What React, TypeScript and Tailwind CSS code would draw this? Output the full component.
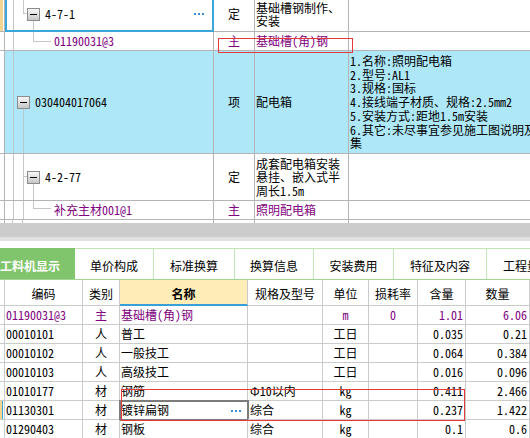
import React from "react";

const mono = "font-['Noto_Sans_Mono_CJK_SC','Noto_Sans_CJK_SC',monospace]";
const sans = "font-['Noto_Sans_CJK_SC','Noto_Sans',sans-serif]";

// top grid cell
const tc = "shrink-0 border-r border-b border-[#b4b4b4] flex items-center";
// bottom grid cell
const bc = "shrink-0 border-r border-b border-[#cbcbcb] flex items-center";

const TL = "#c6c6c6";

function Box({ x, y }: { x: number; y: number }) {
  return (
    <g>
      <rect x={x + 0.5} y={y + 0.5} width={12} height={12} fill="url(#bx)" stroke="#8c8c8c" />
      <line x1={x + 3} x2={x + 10} y1={y + 6.5} y2={y + 6.5} stroke="#000" />
    </g>
  );
}

function Dots() {
  return (
    <div className="flex gap-[2px]">
      <span className="w-[2px] h-[2px] bg-[#3a8fd4]" />
      <span className="w-[2px] h-[2px] bg-[#3a8fd4]" />
      <span className="w-[2px] h-[2px] bg-[#3a8fd4]" />
    </div>
  );
}

function TopGrid() {
  return (
    <div className="-mt-[3px]">
      {/* row 1 */}
      <div className="flex h-[35px]">
        <div className={`${tc} w-[5px] items-stretch`}>
          <div className="w-[3px] bg-[#f3d490]" />
        </div>
        <div className={`${tc} w-[209px] outline-2 outline-[#3ba6d8] -outline-offset-2`}>
          <svg width="40" height="34" className="shrink-0" shapeRendering="crispEdges">
            <line x1="8.5" x2="8.5" y1="0" y2="34" stroke={TL} />
            <line x1="18.5" x2="18.5" y1="0" y2="16.5" stroke={TL} />
            <line x1="18.5" x2="22" y1="16.5" y2="16.5" stroke={TL} />
            <line x1="28.5" x2="28.5" y1="24" y2="34" stroke={TL} />
            <Box x={22} y={11} />
          </svg>
          <span>4-7-1</span>
          <div className="ml-auto mr-[9px] mb-[1px]">
            <Dots />
          </div>
        </div>
        <div className={`${tc} w-[41px] justify-center`}>定</div>
        <div className={`${tc} w-[94px] pl-[1px] leading-[13px]`}>
          基础槽钢制作、
          <br />
          安装
        </div>
        <div className={`${tc} w-[200px]`} />
      </div>

      {/* row 2 */}
      <div className="flex h-[19px] text-[#800080]">
        <div className={`${tc} w-[5px]`} />
        <div className={`${tc} w-[209px]`}>
          <svg width="49" height="18" className="shrink-0" shapeRendering="crispEdges">
            <line x1="8.5" x2="8.5" y1="0" y2="18" stroke={TL} />
            <line x1="28.5" x2="28.5" y1="0" y2="9.5" stroke={TL} />
            <line x1="28.5" x2="46" y1="9.5" y2="9.5" stroke={TL} />
          </svg>
          <span>01190031@3</span>
        </div>
        <div className={`${tc} w-[41px] justify-center`}>主</div>
        <div className={`${tc} w-[94px] pl-[1px]`}>基础槽(角)钢</div>
        <div className={`${tc} w-[200px]`} />
      </div>

      {/* row 3 */}
      <div className="flex h-[103px]">
        <div className={`${tc} w-[5px]`} />
        <div className={`${tc} w-[209px] bg-[#aee8f8]`}>
          <svg width="30" height="102" className="shrink-0" shapeRendering="crispEdges">
            <line x1="8.5" x2="8.5" y1="0" y2="102" stroke="#b8c8cc" />
            <line x1="18.5" x2="18.5" y1="57" y2="102" stroke="#b8c8cc" />
            <Box x={12} y={45} />
          </svg>
          <span>030404017064</span>
        </div>
        <div className={`${tc} w-[41px] justify-center bg-[#aee8f8]`}>项</div>
        <div className={`${tc} w-[94px] pl-[1px] bg-[#aee8f8]`}>配电箱</div>
        <div className={`${tc} w-[200px] pl-[1px] bg-[#aee8f8] leading-[13.7px] whitespace-nowrap overflow-hidden`}>
          <div>
            <div>1.名称:照明配电箱</div>
            <div>2.型号:AL1</div>
            <div>3.规格:国标</div>
            <div>4.接线端子材质、规格:2.5mm2</div>
            <div>5.安装方式:距地1.5m安装</div>
            <div>6.其它:未尽事宜参见施工图说明及</div>
            <div>集</div>
          </div>
        </div>
      </div>

      {/* row 4 */}
      <div className="flex h-[47px]">
        <div className={`${tc} w-[5px]`} />
        <div className={`${tc} w-[209px]`}>
          <svg width="40" height="46" className="shrink-0" shapeRendering="crispEdges">
            <line x1="8.5" x2="8.5" y1="0" y2="46" stroke={TL} />
            <line x1="18.5" x2="18.5" y1="0" y2="46" stroke={TL} />
            <line x1="18.5" x2="22" y1="22.5" y2="22.5" stroke={TL} />
            <line x1="28.5" x2="28.5" y1="29.5" y2="46" stroke={TL} />
            <Box x={22} y={17} />
          </svg>
          <span>4-2-77</span>
        </div>
        <div className={`${tc} w-[41px] justify-center`}>定</div>
        <div className={`${tc} w-[94px] pl-[1px] leading-[13.5px]`}>
          成套配电箱安装
          <br />
          悬挂、嵌入式半
          <br />
          周长1.5m
        </div>
        <div className={`${tc} w-[200px]`} />
      </div>

      {/* row 5 */}
      <div className="flex h-[19px] text-[#800080]">
        <div className={`${tc} w-[5px]`} />
        <div className={`${tc} w-[209px]`}>
          <svg width="49" height="18" className="shrink-0" shapeRendering="crispEdges">
            <line x1="8.5" x2="8.5" y1="0" y2="18" stroke={TL} />
            <line x1="18.5" x2="18.5" y1="0" y2="18" stroke={TL} />
            <line x1="28.5" x2="28.5" y1="0" y2="7.5" stroke={TL} />
            <line x1="28.5" x2="46" y1="7.5" y2="7.5" stroke={TL} />
          </svg>
          <span>补充主材001@1</span>
        </div>
        <div className={`${tc} w-[41px] justify-center`}>主</div>
        <div className={`${tc} w-[94px] pl-[1px]`}>照明配电箱</div>
        <div className={`${tc} w-[200px]`} />
      </div>

      {/* partial next row */}
      <div className="flex h-[3px]">
        <div className="shrink-0 w-[5px] border-r border-[#b4b4b4]" />
        <div className="shrink-0 w-[209px] border-r border-[#b4b4b4] flex">
          <div className="w-[8px] border-r border-[#c6c6c6]" />
          <div className="w-[10px] border-r border-[#c6c6c6]" />
        </div>
        <div className="shrink-0 w-[41px] border-r border-[#b4b4b4]" />
        <div className="shrink-0 w-[94px] border-r border-[#b4b4b4]" />
      </div>
    </div>
  );
}

const tabs = ["单价构成", "标准换算", "换算信息", "安装费用", "特征及内容", "工程量明细"];
const tabW = ["w-[79px]", "w-[81px]", "w-[79px]", "w-[80px]", "w-[93px]", "w-[93px]"];

function Tabs() {
  return (
    <div className={`flex h-[32px] border-b border-[#a3d592] overflow-hidden ${sans}`}>
      <div className="shrink-0 -ml-[15px] w-[90px] h-full bg-[#80c46b] flex items-center justify-center pt-[4px] text-white font-bold">
        工料机显示
      </div>
      {tabs.map((t, i) => (
        <div
          key={t}
          className={`shrink-0 ${tabW[i]} h-full border-t border-r border-[#c3e6b5] flex items-center justify-center pt-[4px]`}
        >
          {t}
        </div>
      ))}
    </div>
  );
}

type Row = {
  code: string;
  kind: string;
  name: string;
  spec: string;
  unit: string;
  loss: string;
  qty: string;
  amt: string;
  purple?: boolean;
  sel?: boolean;
};

const rows: Row[] = [
  { code: "01190031@3", kind: "主", name: "基础槽(角)钢", spec: "", unit: "m", loss: "0", qty: "1.01", amt: "6.06", purple: true },
  { code: "00010101", kind: "人", name: "普工", spec: "", unit: "工日", loss: "", qty: "0.035", amt: "0.21" },
  { code: "00010102", kind: "人", name: "一般技工", spec: "", unit: "工日", loss: "", qty: "0.064", amt: "0.384" },
  { code: "00010103", kind: "人", name: "高级技工", spec: "", unit: "工日", loss: "", qty: "0.016", amt: "0.096" },
  { code: "01010177", kind: "材", name: "钢筋", spec: "Φ10以内", unit: "kg", loss: "", qty: "0.411", amt: "2.466" },
  { code: "01130301", kind: "材", name: "镀锌扁钢", spec: "综合", unit: "kg", loss: "", qty: "0.237", amt: "1.422", sel: true },
  { code: "01290403", kind: "材", name: "钢板", spec: "综合", unit: "kg", loss: "", qty: "0.1", amt: "0.6" },
];

function BottomTable() {
  return (
    <div>
      <div className={`flex h-[26px] ${sans}`}>
        <div className={`${bc} w-[5px]`} />
        <div className={`${bc} w-[78px] justify-center pt-[3px]`}>编码</div>
        <div className={`${bc} w-[37px] justify-center pt-[3px]`}>类别</div>
        <div className="shrink-0 w-[128px] border-r border-[#cbcbcb] border-b-2 border-b-[#3a9fd8] bg-[#ffedb7] flex items-center justify-center pt-[3px] font-bold">
          名称
        </div>
        <div className={`${bc} w-[75px] justify-center pt-[3px]`}>规格及型号</div>
        <div className={`${bc} w-[46px] justify-center pt-[3px]`}>单位</div>
        <div className={`${bc} w-[49px] justify-center pt-[3px]`}>损耗率</div>
        <div className={`${bc} w-[48px] justify-center pt-[3px]`}>含量</div>
        <div className={`${bc} w-[64px] justify-center pt-[3px]`}>数量</div>
      </div>
      {rows.map((r) => (
        <div key={r.code} className={`flex h-[19px] ${r.purple ? "text-[#800080]" : ""}`}>
          <div className={`${bc} w-[5px] items-stretch`}>
            {r.sel && <div className="w-[3px] bg-[#f3d490] border-r border-[#3ba6d8]" />}
          </div>
          <div className={`${bc} w-[78px] pl-[1px]`}>{r.code}</div>
          <div className={`${bc} w-[37px] justify-center`}>{r.kind}</div>
          <div
            className={`${bc} w-[128px] pl-[1px] ${r.sel ? "outline-2 outline-[#7c7c7c] -outline-offset-1" : ""}`}
          >
            <span>{r.name}</span>
            {r.sel && (
              <div className="ml-auto mr-[6px] mt-[2px]">
                <Dots />
              </div>
            )}
          </div>
          <div className={`${bc} w-[75px] pl-[2px] whitespace-nowrap`}>{r.spec}</div>
          <div className={`${bc} w-[46px] justify-center`}>{r.unit}</div>
          <div className={`${bc} w-[49px] justify-center`}>{r.loss}</div>
          <div className={`${bc} w-[48px] justify-end pr-[2px]`}>{r.qty}</div>
          <div className={`${bc} w-[64px] justify-end pr-[2px]`}>{r.amt}</div>
        </div>
      ))}
    </div>
  );
}

export default function App() {
  return (
    <div className={`relative w-[530px] h-[438px] overflow-hidden bg-white text-[12px] leading-none text-black ${mono}`}>
      <svg width="0" height="0" className="absolute">
        <defs>
          <linearGradient id="bx" x1="0" y1="0" x2="0" y2="1">
            <stop offset="0" stopColor="#fafafa" />
            <stop offset="1" stopColor="#c4c4c4" />
          </linearGradient>
        </defs>
      </svg>
      <TopGrid />
      <div className="h-[14px] bg-[#cccccc]" />
      <div className="h-[4px] bg-[#e2e2e2]" />
      <div className="h-[7px] bg-white" />
      <Tabs />
      <BottomTable />

      {/* red annotation boxes */}
      <div className="absolute left-[218px] top-[38px] w-[135px] h-[15px] border border-[#e8393a]" />
      <div className="absolute left-[121px] top-[389px] w-[344px] h-[32px] border border-[#e8393a]" />
    </div>
  );
}
